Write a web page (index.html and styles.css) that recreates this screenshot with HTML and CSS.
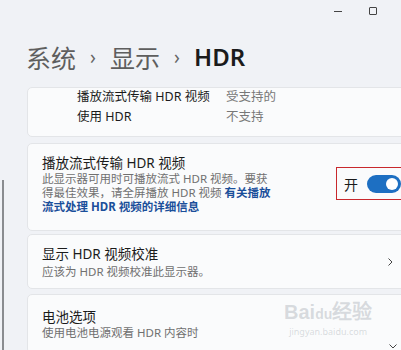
FILE: index.html
```html
<!DOCTYPE html>
<html lang="zh-CN">
<head>
    <meta charset="UTF-8">
    <title>HDR</title>
    <link rel="stylesheet" href="styles.css">
</head>
<body>
<div class="window">
    <div class="titlebar">
        <span class="ctl-min"></span>
        <span class="ctl-max"></span>
    </div>

    <h1 class="crumbs">
        <span class="crumb">系统</span>
        <span class="sep">›</span>
        <span class="crumb">显示</span>
        <span class="sep">›</span>
        <span class="crumb current">HDR</span>
    </h1>

    <div class="scroll-line"></div>

    <div class="cards">
        <div class="card info-card">
            <div class="info-row">
                <span class="info-key">播放流式传输 HDR 视频</span>
                <span class="info-val">受支持的</span>
            </div>
            <div class="info-row">
                <span class="info-key">使用 HDR</span>
                <span class="info-val">不支持</span>
            </div>
        </div>

        <div class="card setting stream">
            <div class="setting-text">
                <div class="setting-title">播放流式传输 HDR 视频</div>
                <div class="setting-desc">此显示器可用时可播放流式 HDR 视频。要获<br>得最佳效果，请全屏播放 HDR 视频 <a class="link" href="#">有关播放<br>流式处理 HDR 视频的详细信息</a></div>
            </div>
            <div class="toggle-box">
                <span class="toggle-label">开</span>
                <span class="toggle"><span class="knob"></span></span>
            </div>
        </div>

        <div class="card setting calib">
            <div class="setting-text">
                <div class="setting-title">显示 HDR 视频校准</div>
                <div class="setting-desc">应该为 HDR 视频校准此显示器。</div>
            </div>
            <svg class="chev" width="10" height="10" viewBox="0 0 10 10"><path d="M3.5 1.5 L7 5 L3.5 8.5" fill="none" stroke="#444" stroke-width="1"/></svg>
        </div>

        <div class="card setting battery">
            <div class="setting-text">
                <div class="setting-title">电池选项</div>
                <div class="setting-desc">使用电池电源观看 HDR 内容时</div>
            </div>
            <svg class="chev-down" width="10" height="10" viewBox="0 0 10 10"><path d="M1.5 3.5 L5 7 L8.5 3.5" fill="none" stroke="#444" stroke-width="1"/></svg>
        </div>
    </div>

    <div class="watermark">
        <div class="wm-main">Bai<span class="wm-du">du</span>经验</div>
        <div class="wm-sub">jingyan.baidu.com</div>
    </div>
</div>
</body>
</html>
```

FILE: styles.css
```css
:root {
    --bg-color: #f0f2f6;
    --card-color: #fafbfc;
    --border-color: #e3e5e8;
    --text-color: #1b1b1b;
    --muted-color: #707070;
    --accent-color: #1d6fc2;
    --link-color: #1a4f9a;
}

body {
    margin: 0;
    background-color: var(--bg-color);
    color: var(--text-color);
    font-family: 'Noto Sans', 'Noto Sans CJK SC', sans-serif;
    overflow: hidden;
}

.window {
    position: relative;
    height: 350px;
}

.titlebar {
    height: 22px;
    display: flex;
    justify-content: flex-end;
    align-items: center;
    gap: 27px;
    padding-right: 24px;
}

.ctl-min {
    width: 8px;
    height: 1px;
    background-color: #444;
    margin-top: 1px;
}

.ctl-max {
    width: 6px;
    height: 6px;
    border: 1px solid #444;
    border-radius: 1px;
}

.crumbs {
    margin: 18px 0 0 26px;
    height: 48px;
    font-size: 25px;
    font-weight: normal;
    line-height: 34px;
    display: flex;
    align-items: flex-start;
}

.crumb {
    color: #5e5e5e;
    font-family: 'Noto Sans CJK SC', sans-serif;
}

.sep {
    color: #666;
    font-size: 19px;
    width: 34px;
    text-align: center;
}

.current {
    color: var(--text-color);
    font-family: 'Noto Sans', sans-serif;
    font-weight: 600;
    font-size: 24px;
}

.scroll-line {
    position: absolute;
    left: 2px;
    top: 180px;
    width: 2px;
    height: 170px;
    background-color: #8a8c90;
}

.cards {
    display: flex;
    flex-direction: column;
    margin-left: 27px;
    margin-right: -12px;
    margin-top: -1px;
}

.card {
    background-color: var(--card-color);
    border: 1px solid var(--border-color);
    border-radius: 5px;
    box-sizing: border-box;
}

.info-card {
    height: 50px;
    padding-left: 49px;
    padding-top: 0;
    display: flex;
    flex-direction: column;
    gap: 2px;
    font-size: 12.5px;
}

.info-row {
    display: flex;
    line-height: 18px;
}

.info-key {
    width: 149px;
}

.info-val {
    color: #777;
}

.setting {
    display: flex;
    align-items: center;
    padding-left: 14px;
    padding-right: 20px;
}

.setting-title {
    font-size: 13.5px;
    line-height: 18px;
}

.setting-desc {
    font-size: 11.5px;
    line-height: 14px;
    color: var(--muted-color);
}

.link {
    color: var(--link-color);
    font-weight: bold;
    text-decoration: none;
}

.stream {
    height: 88px;
    margin-top: 6px;
    align-items: flex-start;
    padding-top: 10px;
    position: relative;
}

.stream .setting-text {
    flex: 1;
}

.toggle-box {
    position: absolute;
    left: 308px;
    top: 23px;
    width: 70px;
    height: 33px;
    border: 1px solid #c8282d;
    display: flex;
    align-items: center;
    gap: 9px;
    padding-left: 7px;
    box-sizing: border-box;
}

.toggle-label {
    font-size: 14px;
}

.toggle {
    width: 34px;
    height: 18px;
    border-radius: 9px;
    background-color: var(--accent-color);
    display: flex;
    align-items: center;
    justify-content: flex-end;
    padding-right: 3px;
    box-sizing: border-box;
}

.knob {
    width: 12px;
    height: 12px;
    border-radius: 50%;
    background-color: #fff;
}

.calib {
    height: 55px;
    margin-top: 3px;
    justify-content: space-between;
}

.calib .setting-desc {
    margin-top: 2px;
}

.calib .chev {
    margin-right: -3px;
}

.battery {
    height: 60px;
    margin-top: 5px;
    align-items: flex-start;
    padding-top: 13px;
    position: relative;
}

.chev-down {
    position: absolute;
    left: 360px;
    top: 46px;
}

.watermark {
    position: absolute;
    left: 284px;
    top: 300px;
    text-align: center;
    color: rgba(150, 155, 165, 0.35);
}

.wm-main {
    font-family: 'Liberation Sans', sans-serif;
    font-weight: bold;
    font-size: 20px;
    line-height: 24px;
}

.wm-du {
    font-size: 14px;
}

.wm-sub {
    font-size: 9px;
    line-height: 12px;
}
```
